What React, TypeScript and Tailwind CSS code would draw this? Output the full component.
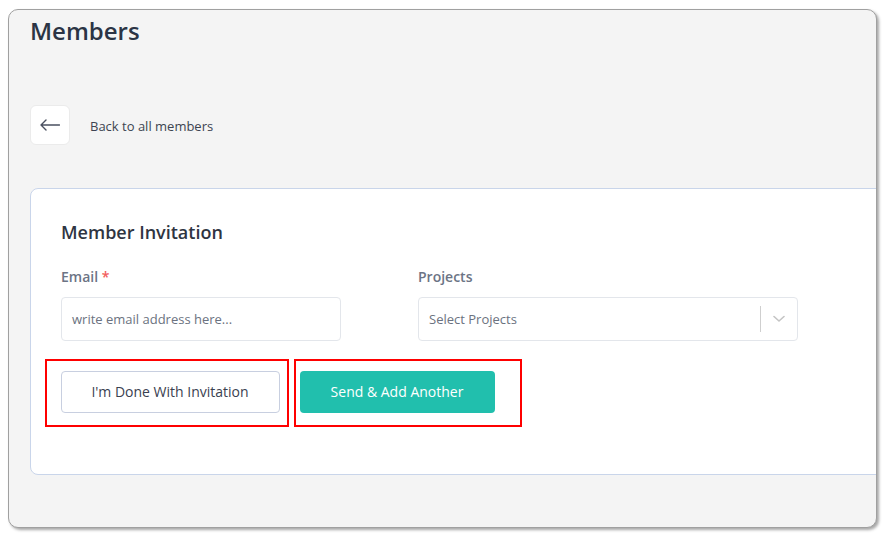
import React from "react";

export default function App() {
  return (
    <div className="w-[885px] h-[537px] bg-white overflow-hidden pt-[9px] pl-[8px]" style={{ fontFamily: '"Open Sans", "Noto Sans", sans-serif' }}>
      <div className="w-[869px] h-[519px] rounded-[10px] border border-[#a0a0a0] bg-[#f4f4f4] overflow-hidden shadow-[2px_2px_3px_rgba(0,0,0,0.35)] pl-[21px] pt-[5px]">
        <h1 className="text-[24px] leading-[32px] font-semibold text-[#2b3445]">Members</h1>

        <div className="flex items-center mt-[58px] gap-[20px]">
          <button className="w-[40px] h-[40px] rounded-[6px] bg-white border border-[#ebebeb] flex items-center justify-center">
            <svg width="20" height="12" viewBox="0 0 20 12" fill="none">
              <path d="M19.5 6H1M6 1L1 6L6 11" stroke="#4a5060" strokeWidth="1.4" strokeLinecap="round" strokeLinejoin="round" />
            </svg>
          </button>
          <span className="text-[13px] leading-[20px] pt-[1px] text-[#3d4451]">Back to all members</span>
        </div>

        <div className="mt-[43px] w-[900px] h-[287px] bg-white border border-[#c9d5ea] rounded-[8px] pt-[31px] pl-[30px]">
          <h2 className="text-[18px] leading-[24px] font-semibold text-[#2f3542]">Member Invitation</h2>

          <div className="flex gap-[77px] mt-[23px]">
            <div className="w-[280px]">
              <label className="block text-[14px] leading-[20px] font-semibold text-[#6c7485]">
                Email <span className="text-[#f25c5c]">*</span>
              </label>
              <div className="mt-[10px] h-[44px] border border-[#e3e6eb] rounded-[4px] flex items-center pl-[10px] pt-[2px]">
                <span className="text-[13px] text-[#6b7280]">write email address here...</span>
              </div>
            </div>
            <div className="w-[380px]">
              <label className="block text-[14px] leading-[20px] font-semibold text-[#6c7485]">Projects</label>
              <div className="mt-[10px] h-[44px] border border-[#e3e6eb] rounded-[4px] flex items-center pl-[10px]">
                <span className="flex-1 text-[13px] text-[#6b7280] pt-[2px]">Select Projects</span>
                <span className="w-px h-[26px] bg-[#cfcfcf]" />
                <span className="w-[36px] flex items-center justify-center">
                  <svg width="12" height="8" viewBox="0 0 12 8" fill="none">
                    <path d="M1 1.5L6 6L11 1.5" stroke="#c4c4c4" strokeWidth="1.6" strokeLinecap="round" strokeLinejoin="round" />
                  </svg>
                </span>
              </div>
            </div>
          </div>

          <div className="flex gap-[5px] mt-[18px] ml-[-16px]">
            <div className="w-[244px] h-[68px] border-[2.5px] border-[#ff0000] pl-[13.5px] pt-[9.5px]">
              <button className="w-[219px] h-[42px] border border-[#c8cfe0] rounded-[4px] bg-white text-[14px] text-[#3a4150]">
                I'm Done With Invitation
              </button>
            </div>
            <div className="w-[228px] h-[68px] border-[2.5px] border-[#ff0000] pl-[3.5px] pt-[9.5px]">
              <button className="w-[195px] h-[42px] rounded-[4px] bg-[#21bfad] text-[14px] text-white">
                Send &amp; Add Another
              </button>
            </div>
          </div>
        </div>
      </div>
    </div>
  );
}
